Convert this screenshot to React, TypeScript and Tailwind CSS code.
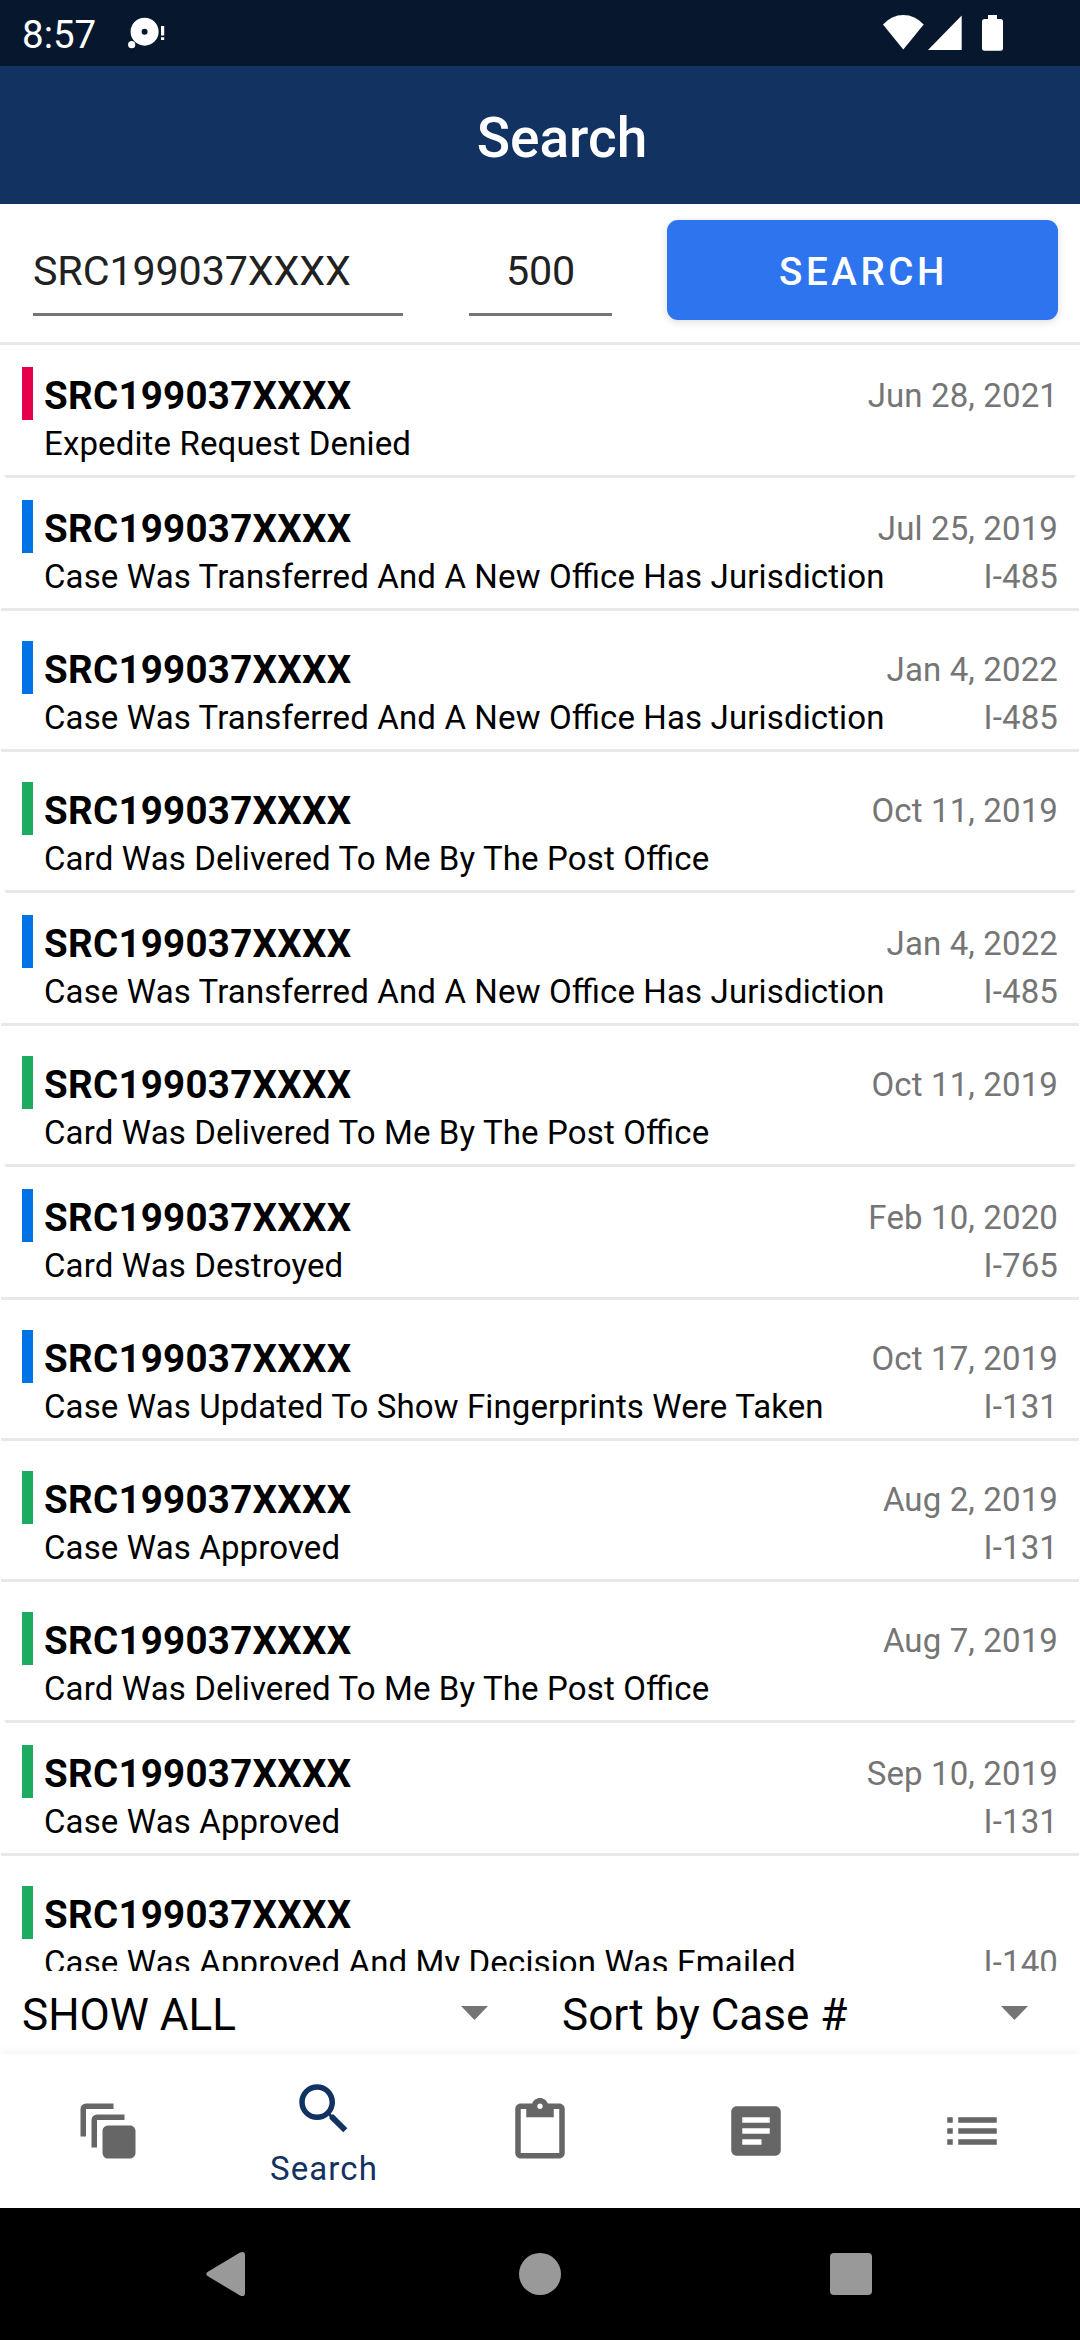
import React from 'react';
import { MdArticle, MdAutoAwesomeMotion, MdContentPaste, MdList, MdSearch } from 'react-icons/md';

type CaseItem = {
  status: string;
  date?: string;
  form?: string;
  color: string;
  tall?: boolean;
};

const BLUE = 'bg-[#0073e6]';
const GREEN = 'bg-[#1dab60]';
const RED = 'bg-[#e6004c]';

const cases: CaseItem[] = [
  { status: 'Expedite Request Denied', date: 'Jun 28, 2021', color: RED },
  { status: 'Case Was Transferred And A New Office Has Jurisdiction', date: 'Jul 25, 2019', form: 'I-485', color: BLUE },
  { status: 'Case Was Transferred And A New Office Has Jurisdiction', date: 'Jan 4, 2022', form: 'I-485', color: BLUE, tall: true },
  { status: 'Card Was Delivered To Me By The Post Office', date: 'Oct 11, 2019', color: GREEN, tall: true },
  { status: 'Case Was Transferred And A New Office Has Jurisdiction', date: 'Jan 4, 2022', form: 'I-485', color: BLUE },
  { status: 'Card Was Delivered To Me By The Post Office', date: 'Oct 11, 2019', color: GREEN, tall: true },
  { status: 'Card Was Destroyed', date: 'Feb 10, 2020', form: 'I-765', color: BLUE },
  { status: 'Case Was Updated To Show Fingerprints Were Taken', date: 'Oct 17, 2019', form: 'I-131', color: BLUE, tall: true },
  { status: 'Case Was Approved', date: 'Aug 2, 2019', form: 'I-131', color: GREEN, tall: true },
  { status: 'Card Was Delivered To Me By The Post Office', date: 'Aug 7, 2019', color: GREEN, tall: true },
  { status: 'Case Was Approved', date: 'Sep 10, 2019', form: 'I-131', color: GREEN },
  { status: 'Case Was Approved And My Decision Was Emailed', form: 'I-140', color: GREEN, tall: true },
];

const StatusBar = () => (
  <div className="flex h-[66px] shrink-0 items-center bg-[#07182e] pl-[22px] text-white">
    <span className="pt-[4px] text-[38.5px] leading-[60px]">8:57</span>
    <svg className="ml-[31px] h-[66px] w-[40px]" viewBox="0 0 40 66" fill="currentColor">
      <path fillRule="evenodd" d="M17.6 17.7a14 14 0 1 0 0 28a14 14 0 1 0 0-28zm0 11a3 3 0 1 1 0 6a3 3 0 1 1 0-6z" />
      <circle cx="4.7" cy="44.7" r="3.6" />
      <path d="M34 26h3.2v9.5H34zM34 37.3h3.2V40H34z" />
    </svg>
    <svg className="ml-auto mr-[70px] h-[66px] w-[130px]" viewBox="0 0 130 66" fill="currentColor">
      <path d="M23.3 49.5L3 24.5Q11.5 15 23.3 15T43.7 24.5z" />
      <path d="M48 50L81.7 15.5V50z" />
      <path d="M108 15h9v4h3.5q2.5 0 2.5 2.5v27q0 2.3-2.5 2.3h-16q-2.5 0-2.5-2.3v-27q0-2.5 2.5-2.5h3.5z" />
    </svg>
  </div>
);

const SearchForm = () => (
  <div className="flex h-[141px] shrink-0 items-start border-b-[3px] border-[#e8e8e8] pl-[33px] pr-[22px] pt-4 text-[41.25px] tracking-[-0.12px] text-[#212121]">
    <div className="mr-[66px] h-[96px] w-[370px] border-b-[3px] border-[#757575] pt-[21px] leading-[60px]">SRC199037XXXX</div>
    <div className="mr-[55px] h-[96px] w-[143px] border-b-[3px] border-[#757575] pt-[21px] text-center leading-[60px]">500</div>
    <button className="h-[100px] flex-1 rounded-[11px] bg-[#2d74ee] pl-[2px] pt-[4px] text-[38.5px] font-medium tracking-[3.6px] text-white shadow-[0_2px_8px_rgba(0,0,0,0.14)]">
      SEARCH
    </button>
  </div>
);

const CaseRow = ({ item }: { item: CaseItem }) => (
  <div className={item.tall ? 'pt-[30px]' : 'pt-[22px]'}>
    <div className="flex h-[53px] items-start px-[22px]">
      <div className={`mr-[11px] h-[53px] w-[11px] ${item.color}`} />
      <span className="flex-1 text-[38.5px] font-bold leading-[58px] tracking-[0.275px]">SRC199037XXXX</span>
      <span className="text-[33px] leading-[58px] tracking-[0.13px] text-[#757575]">{item.date}</span>
    </div>
    <div className="flex h-[55px] justify-between pl-[44px] pr-[22px] text-[33px] leading-[48px] tracking-[0.13px] [font-feature-settings:'liga']">
      <span>{item.status}</span>
      <span className="text-[#757575]">{item.form}</span>
    </div>
    <div
      className={`h-[3px] bg-[#e8e8e8] ${
        item.form ? 'mx-px' : '[clip-path:polygon(4px_0,1076px_0,1074px_100%,6px_100%)]'
      }`}
    />
  </div>
);

const Spinner = ({ label }: { label: string }) => (
  <div className="flex flex-1 items-start justify-between pl-[22px] pr-[52px]">
    <span className="text-[44px] leading-[88px]">{label}</span>
    <svg className="mt-[35px] h-[14px] w-[27px]" viewBox="0 0 27 14" fill="#757575">
      <path d="M0 0h27L13.5 14z" />
    </svg>
  </div>
);

const tabs = [
  { icon: MdAutoAwesomeMotion },
  { icon: MdSearch, label: 'Search' },
  { icon: MdContentPaste },
  { icon: MdArticle },
  { icon: MdList },
];

const BottomTabs = () => (
  <div className="z-10 flex h-[154px] shrink-0 bg-white shadow-[0_0_10px_rgba(0,0,0,0.08)]">
    {tabs.map(({ icon: Icon, label }, i) => (
      <div
        key={i}
        className={`flex flex-1 flex-col items-center ${label ? 'pt-[22px] text-[#123262]' : 'justify-center text-[#666666]'}`}
      >
        <Icon className="size-[66px] shrink-0" />
        {label && <span className="text-[33px] leading-[54px] tracking-[1.1px]">{label}</span>}
      </div>
    ))}
  </div>
);

const SystemNav = () => (
  <div className="z-10 flex h-[132px] shrink-0 items-center bg-black pl-[206px]">
    <svg className="h-[46px] w-[40px]" viewBox="0 0 40 46" fill="#999999">
      <path d="M1.5 21L34 1.5Q39 -.5 39 4V42Q39 46.5 34 44.5L1.5 25Q-1 23 1.5 21z" />
    </svg>
    <div className="ml-[273px] size-[42px] rounded-full bg-[#999999]" />
    <div className="ml-[269px] size-[42px] rounded-[4px] bg-[#999999]" />
  </div>
);

export default function App() {
  return (
    <div className="flex h-[2340px] w-[1080px] flex-col overflow-hidden bg-white font-['Roboto',sans-serif] text-black">
      <StatusBar />
      <header className="flex h-[138px] shrink-0 items-center justify-center bg-[#123262] pl-[44px] pt-[6px] text-[55px] font-medium text-white">
        Search
      </header>
      <SearchForm />
      <main className="h-[1626px] shrink-0 overflow-hidden">
        {cases.map((item, i) => (
          <CaseRow key={i} item={item} />
        ))}
      </main>
      <div className="flex h-[83px] shrink-0 overflow-hidden">
        <Spinner label="SHOW ALL" />
        <Spinner label="Sort by Case #" />
      </div>
      <BottomTabs />
      <SystemNav />
    </div>
  );
}
